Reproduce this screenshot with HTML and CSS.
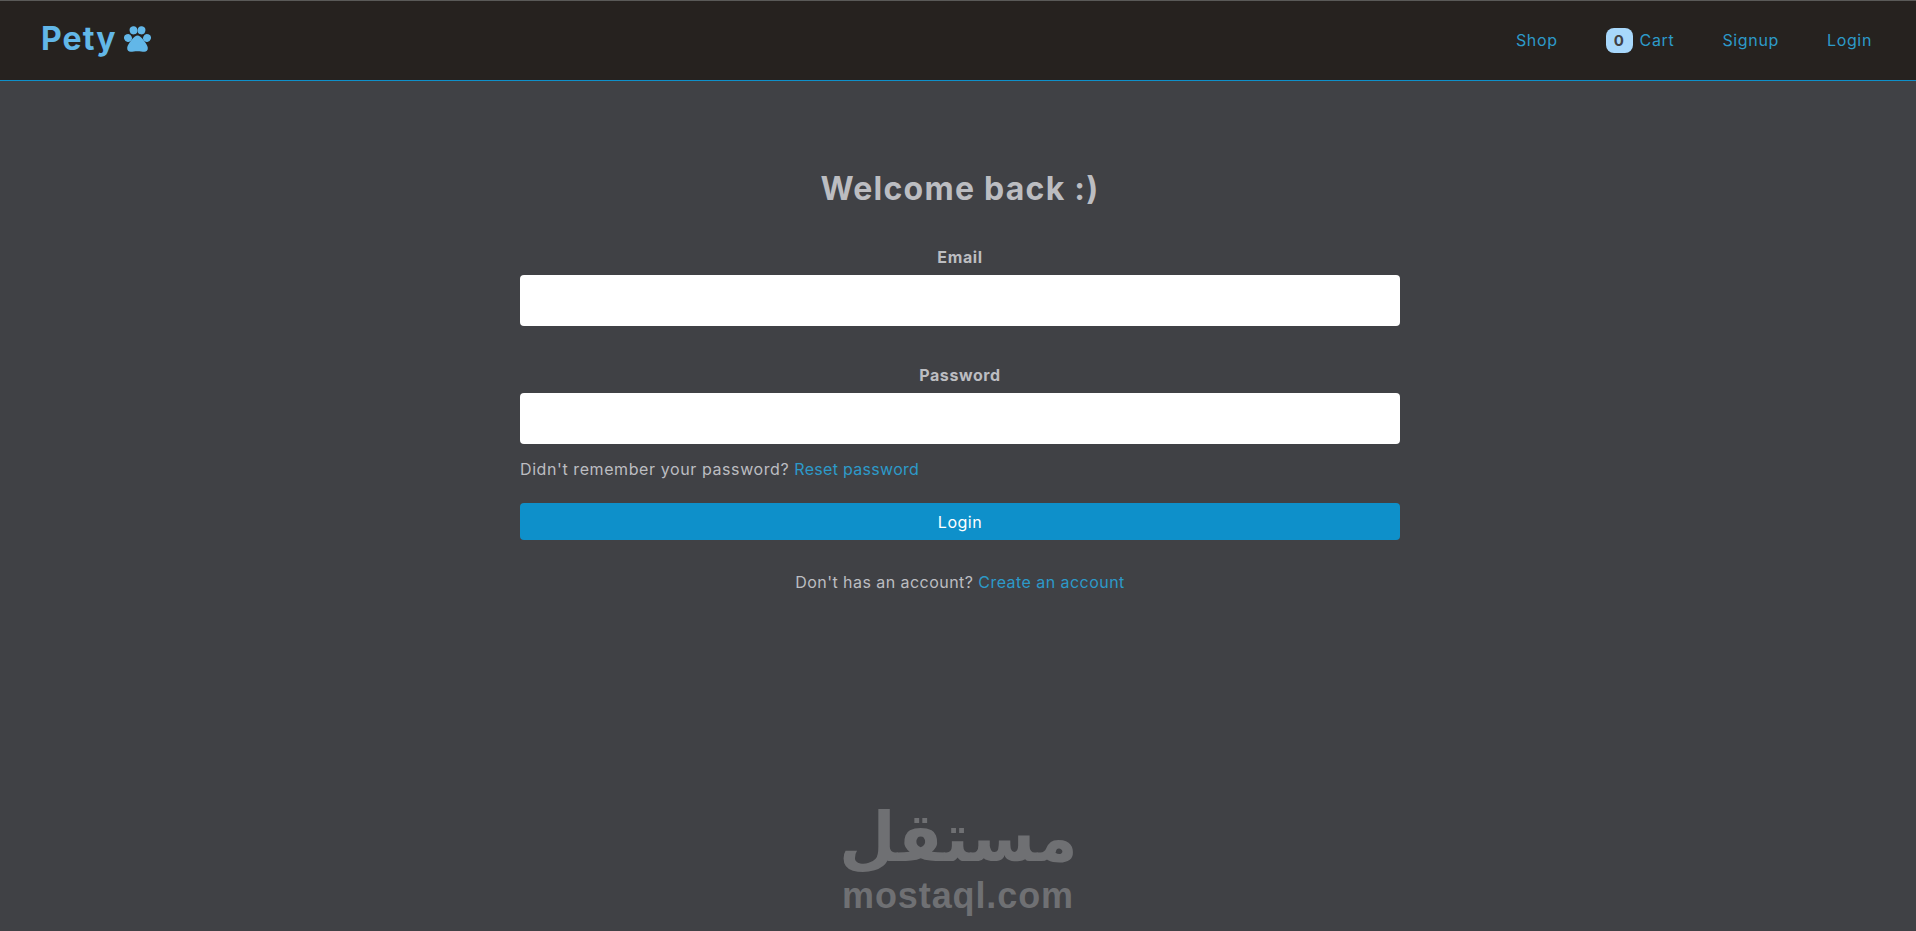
FILE: index.html
```html
<!DOCTYPE html>
<html lang="en">
<head>
<meta charset="utf-8">
<title>Pety</title>
<link rel="stylesheet" href="styles.css">
</head>
<body>
<header class="topbar">
  <a class="brand" href="#">Pety
    <svg class="paw" viewBox="0 0 27 26" aria-hidden="true">
      <ellipse cx="4" cy="12" rx="3.9" ry="4" transform="rotate(-20 4 12)"/>
      <ellipse cx="9.500" cy="4.300" rx="3.900" ry="4.100" transform="rotate(-8 9.500 4.300)"/>
      <ellipse cx="17.500" cy="4.300" rx="3.900" ry="4.100" transform="rotate(8 17.500 4.300)"/>
      <ellipse cx="23" cy="12" rx="3.900" ry="4" transform="rotate(20 23 12)"/>
      <path d="M13.500 9.500c3.200 0 9.800 8.300 10.300 12.300.3 2.700-1.500 4-3.500 4-2.200 0-3.900-.6-6.800-.6s-4.600.6-6.800.6c-2 0-3.800-1.300-3.500-4C3.700 17.800 10.300 9.500 13.500 9.500z"/>
    </svg>
  </a>
  <nav class="nav">
    <a href="#">Shop</a>
    <a href="#" class="cart"><span class="badge">0</span>Cart</a>
    <a href="#">Signup</a>
    <a href="#">Login</a>
  </nav>
</header>
<main class="page">
  <h1 class="title">Welcome back :)</h1>
  <form class="form">
    <label class="field"><span class="label">Email</span><input class="input" type="email"></label>
    <label class="field"><span class="label">Password</span><input class="input" type="password"></label>
    <p class="hint">Didn't remember your password? <a href="#">Reset password</a></p>
    <button class="submit" type="button">Login</button>
    <p class="alt">Don't has an account? <a href="#">Create an account</a></p>
  </form>
</main>
<div class="watermark">
  <span class="wm-ar" lang="ar" dir="rtl">مستقل</span>
  <span class="wm-en">mostaql.com</span>
</div>
</body>
</html>
```
FILE: styles.css
```css
* { box-sizing: border-box; }
html, body { height: 100%; }
body {
  margin: 0;
  background: #404145;
  font-family: Inter, "Open Sans", sans-serif;
  font-size: 16px;
  overflow: hidden;
  position: relative;
}
a { text-decoration: none; color: #2d9ac9; }
.topbar {
  height: 81px;
  background: #26221f;
  border-top: 1px solid #5a5a58;
  border-bottom: 1px solid #0e90ca;
  display: flex;
  align-items: center;
  justify-content: space-between;
  padding: 0 44px 0 41px;
}
.brand {
  display: flex;
  align-items: center;
  gap: 7px;
  color: #62b7e8;
  font-size: 32px;
  font-weight: 700;
  letter-spacing: 1.1px;
  line-height: 38px;
  padding-bottom: 3px;
}
.paw { width: 27px; height: 26px; fill: #62b7e8; }
.nav { display: flex; align-items: center; gap: 48px; font-size: 16px; letter-spacing: .65px; padding-bottom: 1px; }
.cart { display: flex; align-items: center; gap: 7px; }
.badge {
  width: 27px;
  height: 25px;
  border-radius: 8px;
  background: #a8d8fb;
  color: #404145;
  font-weight: 700;
  font-size: 15px;
  display: flex;
  align-items: center;
  justify-content: center;
}
.page { display: flex; flex-direction: column; align-items: center; padding-left: 4px; }
.title {
  margin: 88px 0 0;
  color: #bcbdc1;
  font-size: 32px;
  line-height: 40px;
  font-weight: 700;
  letter-spacing: 1.25px;
}
.form { width: 880px; margin-top: 38px; }
.field { display: block; margin-bottom: 39px; text-align: center; }
.label {
  display: block;
  color: #bcbdc1;
  font-weight: 700;
  font-size: 16px;
  line-height: 20px;
  margin-bottom: 8px;
  letter-spacing: .6px;
}
.input {
  display: block;
  width: 100%;
  height: 51px;
  border: 0;
  border-radius: 4px;
  background: #fff;
}
.hint, .alt { color: #bcbdc1; margin: 0; line-height: 24px; }
.hint { margin-top: -26px; letter-spacing: .59px; }
.hint a { letter-spacing: .3px; }
.submit {
  display: block;
  width: 100%;
  height: 37px;
  margin-top: 22px;
  border: 0;
  border-radius: 4px;
  background: #0e90ca;
  color: #fff;
  font: inherit;
  letter-spacing: .5px;
}
.alt { text-align: center; margin-top: 30px; letter-spacing: .45px; }
.watermark {
  position: absolute;
  left: 842px;
  top: 801px;
  width: 232px;
  display: flex;
  flex-direction: column;
  align-items: center;
  color: #6f7073;
}
.wm-ar {
  font-family: "DejaVu Sans", sans-serif;
  font-weight: 700;
  font-size: 68px;
  line-height: 74px;
  transform: scaleX(.96);
}
.wm-en {
  font-family: "Liberation Sans", sans-serif;
  font-weight: 700;
  font-size: 36px;
  line-height: 42px;
  letter-spacing: .9px;
}
```
